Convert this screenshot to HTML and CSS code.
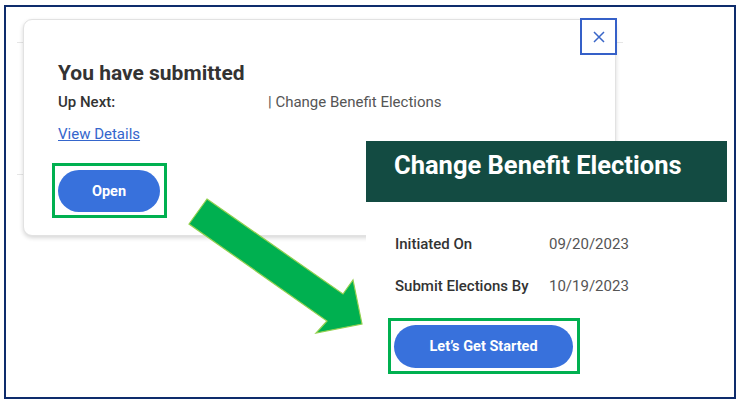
FILE: index.html
```html
<!DOCTYPE html>
<html lang="en">
<head>
<meta charset="utf-8">
<title>Change Benefit Elections</title>
<link rel="stylesheet" href="styles.css">
</head>
<body>
<div class="frame">
  <div class="page-row"></div>

  <div class="popup">
    <button class="close-btn" aria-label="Close">
      <svg width="12" height="12" viewBox="0 0 12 12"><path d="M1 1 L11 11 M11 1 L1 11" stroke="#3a66c8" stroke-width="1.5" fill="none"/></svg>
    </button>
    <h1 class="popup-title">You have submitted</h1>
    <div class="up-next">
      <span class="up-next-label">Up Next:</span>
      <span class="up-next-value">| Change Benefit Elections</span>
    </div>
    <a class="view-link" href="#">View Details</a>
    <div class="highlight open-hl">
      <button class="pill open-btn">Open</button>
    </div>
  </div>

  <svg class="arrow" width="200" height="160" viewBox="0 0 200 160">
    <polygon points="27,9 163,104 173,90 182,134 136,143 147,131 9,34" fill="#00b050" stroke="#92d050" stroke-width="1.2" stroke-linejoin="miter"/>
  </svg>

  <div class="task-panel">
    <div class="task-header">Change Benefit Elections</div>
    <div class="task-body">
      <div class="task-row">
        <span class="task-label">Initiated On</span>
        <span class="task-value">09/20/2023</span>
      </div>
      <div class="task-row">
        <span class="task-label">Submit Elections By</span>
        <span class="task-value">10/19/2023</span>
      </div>
      <div class="highlight start-hl">
        <button class="pill start-btn">Let’s Get Started</button>
      </div>
    </div>
  </div>
</div>
</body>
</html>
```
FILE: styles.css
```css
* { box-sizing: border-box; }

body {
  margin: 0;
  background: #ffffff;
  font-family: Roboto, "Liberation Sans", Arial, sans-serif;
  color: #333333;
}

.frame {
  position: relative;
  width: 732px;
  height: 394px;
  margin: 5px 0 0 4px;
  border: 2px solid #0e2c6c;
  background: #ffffff;
  padding-top: 35px;
  padding-left: 11px;
  overflow: hidden;
}

.page-row {
  width: 606px;
  height: 133px;
  border-top: 1px solid #e6e6e6;
  border-bottom: 1px solid #e6e6e6;
}

.popup {
  position: absolute;
  left: 17px;
  top: 12px;
  width: 593px;
  height: 217px;
  background: #ffffff;
  border: 1px solid #e2e2e2;
  border-radius: 9px;
  box-shadow: 0 2px 4px rgba(0, 0, 0, 0.16);
  padding: 41px 0 0 34px;
}

.close-btn {
  position: absolute;
  top: -2px;
  right: -2px;
  width: 37px;
  height: 37px;
  border: 2px solid #3560c8;
  background: #ffffff;
  padding: 0;
  display: flex;
  align-items: center;
  justify-content: center;
}

.popup-title {
  margin: 0;
  font-size: 21px;
  line-height: 24px;
  font-weight: 700;
  color: #333333;
}

.up-next {
  display: flex;
  margin-top: 7px;
  font-size: 15px;
  line-height: 20px;
}

.up-next-label {
  width: 210px;
  font-weight: 500;
  color: #333333;
}

.up-next-value {
  color: #555555;
}

.view-link {
  display: inline-block;
  margin-top: 12px;
  font-size: 15px;
  line-height: 20px;
  color: #3566cc;
  text-decoration: underline;
}

.highlight {
  border: 3px solid #00b050;
  background: #ffffff;
  padding: 4px 4px 3px 3px;
  width: max-content;
}

.open-hl {
  margin-top: 19px;
  margin-left: -6px;
}

.pill {
  display: block;
  border: none;
  background: #3871dc;
  color: #ffffff;
  font-family: Roboto, "Liberation Sans", Arial, sans-serif;
  font-weight: 700;
  font-size: 14.5px;
  padding: 0;
}

.open-btn {
  width: 102px;
  height: 42px;
  border-radius: 21px;
}

.arrow {
  position: absolute;
  left: 174px;
  top: 183px;
}

.task-panel {
  position: absolute;
  left: 360px;
  top: 134px;
  width: 361px;
  height: 250px;
  background: #ffffff;
}

.task-header {
  height: 61px;
  background: #134b42;
  color: #ffffff;
  font-size: 25.5px;
  line-height: 28px;
  font-weight: 700;
  padding: 10px 0 0 28px;
}

.task-body {
  padding: 32px 0 0 29px;
}

.task-row {
  display: flex;
  font-size: 15px;
  line-height: 20px;
  margin-bottom: 22px;
}

.task-row:last-of-type {
  margin-bottom: 0;
}

.task-label {
  width: 154px;
  font-weight: 500;
  color: #333333;
}

.task-value {
  color: #555555;
}

.start-hl {
  margin-top: 18px;
  margin-left: -7px;
}

.start-btn {
  width: 179px;
  height: 43px;
  border-radius: 22px;
}
```
